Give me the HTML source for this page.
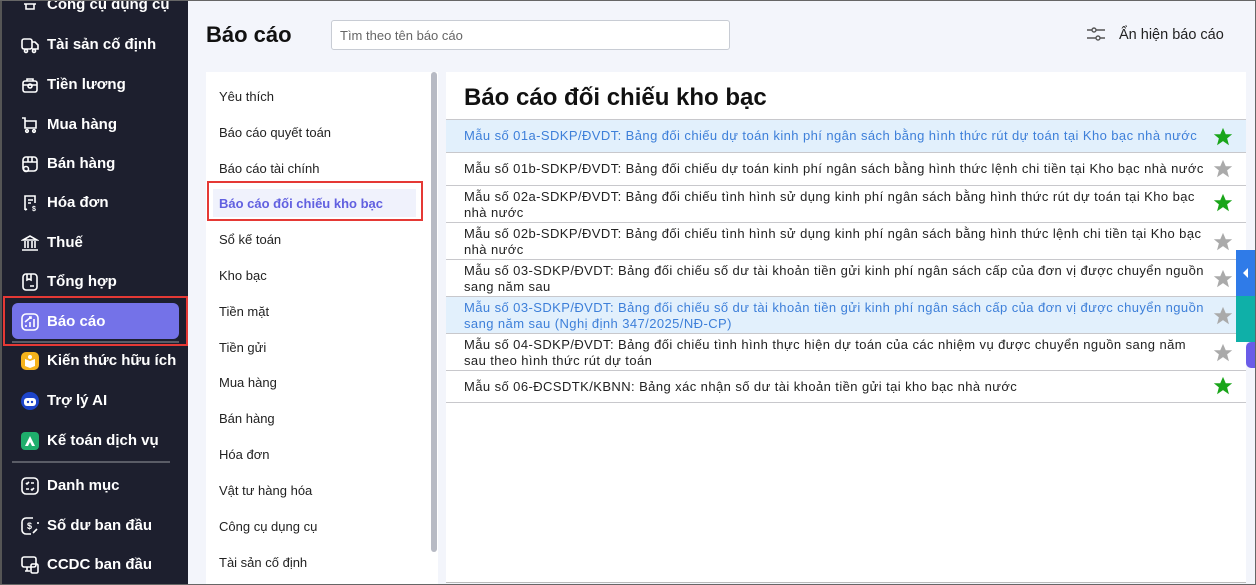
<!DOCTYPE html>
<html><head><meta charset="utf-8"><style>
*{box-sizing:border-box;margin:0;padding:0}
body{width:1256px;height:585px;overflow:hidden;background:#f3f5fb;font-family:"Liberation Sans",sans-serif;position:relative;color:#222}
.frame{position:absolute;inset:0;border:1px solid #666;border-left:none;pointer-events:none;z-index:20}
.side{position:absolute;left:0;top:0;width:188px;height:585px;background:#1d1f2e;border-left:2px solid #555}
.si{position:absolute;left:0;height:30px;width:188px;color:#fff;font-size:15px;font-weight:bold;line-height:30px;padding-left:45px}
.si svg{position:absolute;left:19px;top:6px}
.sel{position:absolute;left:10px;top:303px;width:167px;height:36px;background:#7472e8;border-radius:6px}
.redb{position:absolute;border:2px solid #e53935}
.hr{position:absolute;left:10px;width:158px;height:2px;background:#5a5c66}
h1{position:absolute;left:206px;top:22px;font-size:22px;font-weight:bold;color:#111}
.search{position:absolute;left:331px;top:20px;width:399px;height:30px;border:1px solid #c8ccd4;border-radius:3px;background:#fff;font-size:13px;color:#666;padding:7px 8px}
.toggle{position:absolute;left:1086px;top:25px;font-size:14.5px;color:#222}
.toggle span{position:absolute;left:33px;top:2px;white-space:nowrap}
.lp{position:absolute;left:206px;top:72px;width:232px;height:513px;background:#fff}
.li{position:absolute;left:13px;font-size:13px;color:#222}
.scroll{position:absolute;left:431px;top:72px;width:6px;height:480px;background:#b7bac4;border-radius:3px}
.rp{position:absolute;left:446px;top:72px;width:800px;height:511px;background:#fff;border-bottom:1px solid #bbb}
h2{position:absolute;left:18px;top:12px;font-size:24px;font-weight:bold;color:#111}
.row{position:absolute;left:0;width:800px;border-top:1px solid #c8c8cc;font-size:13px;letter-spacing:0.42px;color:#222;padding:6px 40px 0 18px;line-height:16px}
.row.b{background:#e2f0fc;color:#3d7fd9}
.row svg{position:absolute;right:12px}
</style></head><body>
<div class="side">
<div class="redb" style="left:1px;top:296px;width:185px;height:50px"></div>
<div class="sel"></div>
<div class="hr" style="top:341px;width:167px"></div>
<div class="hr" style="top:461px"></div>
<div class="si" style="top:-10px"><svg width="18" height="18" viewBox="0 0 18 18" fill="none" stroke="#fff" stroke-width="1.6"><path d="M3 8h12M5 8v5h8V8"/></svg>Công cụ dụng cụ</div>
<div class="si" style="top:30px"><svg width="18" height="18" viewBox="0 0 18 18" fill="none" stroke="#fff" stroke-width="1.6"><rect x="1" y="3" width="10" height="10" rx="2"/><path d="M11 6h3l3 3v4h-6"/><circle cx="5" cy="15" r="1.5"/><circle cx="13" cy="15" r="1.5"/></svg>Tài sản cố định</div>
<div class="si" style="top:70px"><svg width="18" height="18" viewBox="0 0 18 18" fill="none" stroke="#fff" stroke-width="1.6"><rect x="2" y="5" width="14" height="11" rx="2"/><path d="M6 5V3h6v2M2 9h14"/><circle cx="9" cy="10" r="2"/></svg>Tiền lương</div>
<div class="si" style="top:110px"><svg width="18" height="18" viewBox="0 0 18 18" fill="none" stroke="#fff" stroke-width="1.6"><path d="M1 2h3v10h11V5H4"/><circle cx="6" cy="15" r="1.3"/><circle cx="13" cy="15" r="1.3"/></svg>Mua hàng</div>
<div class="si" style="top:149px"><svg width="18" height="18" viewBox="0 0 18 18" fill="none" stroke="#fff" stroke-width="1.6"><rect x="2" y="2" width="14" height="14" rx="3"/><path d="M2 7h14M7 2v5M11 2v5"/><circle cx="5" cy="14" r="2.5"/></svg>Bán hàng</div>
<div class="si" style="top:188px"><svg width="18" height="18" viewBox="0 0 18 18" fill="none" stroke="#fff" stroke-width="1.6"><path d="M4 16V2h10v7M4 16l2-1"/><path d="M7 6h5M7 9h3"/><text x="11" y="17" font-size="7" fill="#fff" stroke="none">$</text></svg>Hóa đơn</div>
<div class="si" style="top:228px"><svg width="18" height="18" viewBox="0 0 18 18" fill="none" stroke="#fff" stroke-width="1.6"><path d="M2 6l7-4 7 4zM4 7v7M7 7v7M11 7v7M14 7v7M1 16h16"/></svg>Thuế</div>
<div class="si" style="top:267px"><svg width="18" height="18" viewBox="0 0 18 18" fill="none" stroke="#fff" stroke-width="1.6"><rect x="2" y="1" width="14" height="16" rx="3"/><path d="M6 1v6l2-1 2 1V1M9 13h4"/></svg>Tổng hợp</div>
<div class="si" style="top:307px"><svg width="18" height="18" viewBox="0 0 18 18" fill="none" stroke="#fff" stroke-width="1.6"><rect x="1" y="1" width="16" height="16" rx="4"/><path d="M5 14v-2M9 14V9M13 14V6M4 9l6-5M8 4h2v2"/></svg>Báo cáo</div>
<div class="si" style="top:346px"><svg width="18" height="18" viewBox="0 0 18 18"><rect x="0" y="0" width="18" height="18" rx="5" fill="#f5b31b"/><path d="M4 7l5 2 5-2v7l-5 2-5-2z" fill="#fff"/><circle cx="9" cy="5" r="2" fill="#fff"/></svg>Kiến thức hữu ích</div>
<div class="si" style="top:386px"><svg width="18" height="18" viewBox="0 0 18 18"><circle cx="9" cy="9" r="9" fill="#1d44c9"/><rect x="3" y="6" width="12" height="8" rx="3" fill="#fff"/><circle cx="7" cy="10" r="1.2" fill="#1d44c9"/><circle cx="11" cy="10" r="1.2" fill="#1d44c9"/></svg>Trợ lý AI</div>
<div class="si" style="top:426px"><svg width="18" height="18" viewBox="0 0 18 18"><rect width="18" height="18" rx="4" fill="#1fae6c"/><path d="M4 14L9 4l5 10h-3L9 10l-2 4z" fill="#fff"/></svg>Kế toán dịch vụ</div>
<div class="si" style="top:471px"><svg width="18" height="18" viewBox="0 0 18 18" fill="none" stroke="#fff" stroke-width="1.6"><rect x="1" y="1" width="16" height="16" rx="4"/><path d="M5 6l1 1 2-2M10 6h3M5 12h3M10 12l1 1 2-2"/></svg>Danh mục</div>
<div class="si" style="top:511px"><svg width="18" height="18" viewBox="0 0 18 18" fill="none" stroke="#fff" stroke-width="1.6"><path d="M12 1H5a4 4 0 00-4 4v8a4 4 0 004 4h5M17 7V5"/><text x="6" y="12" font-size="9" fill="#fff" stroke="none">$</text><path d="M12 16l4-4"/></svg>Số dư ban đầu</div>
<div class="si" style="top:550px"><svg width="18" height="18" viewBox="0 0 18 18" fill="none" stroke="#fff" stroke-width="1.6"><rect x="1" y="1" width="14" height="10" rx="2"/><path d="M4 15h5M6 11v4"/><rect x="10" y="8" width="7" height="9" rx="1.5"/></svg>CCDC ban đầu</div>
</div>

<h1>Báo cáo</h1>
<div class="search">Tìm theo tên báo cáo</div>
<div class="toggle"><svg width="20" height="18" viewBox="0 0 20 18" fill="none" stroke="#555" stroke-width="1.4"><path d="M1 5h5M10 5h9M1 13h9M14 13h5"/><circle cx="8" cy="5" r="2"/><circle cx="12" cy="13" r="2"/></svg><span>Ẩn hiện báo cáo</span></div>

<div class="lp">
<div class="li" style="top:17px">Yêu thích</div>
<div class="li" style="top:53px">Báo cáo quyết toán</div>
<div class="li" style="top:89px">Báo cáo tài chính</div>
<div style="position:absolute;left:7px;top:117px;width:203px;height:28px;background:#f0f2fc"></div>
<div class="redb" style="left:1px;top:109px;width:216px;height:40px"></div>
<div class="li" style="top:124px;color:#6160e0;font-weight:bold">Báo cáo đối chiếu kho bạc</div>
<div class="li" style="top:160px">Sổ kế toán</div>
<div class="li" style="top:196px">Kho bạc</div>
<div class="li" style="top:232px">Tiền mặt</div>
<div class="li" style="top:268px">Tiền gửi</div>
<div class="li" style="top:303px">Mua hàng</div>
<div class="li" style="top:339px">Bán hàng</div>
<div class="li" style="top:375px">Hóa đơn</div>
<div class="li" style="top:411px">Vật tư hàng hóa</div>
<div class="li" style="top:447px">Công cụ dụng cụ</div>
<div class="li" style="top:483px">Tài sản cố định</div>
</div>
<div class="scroll"></div>

<div class="rp">
<h2>Báo cáo đối chiếu kho bạc</h2>
<div class="row b" style="top:47px;height:33px;padding-top:8px">Mẫu số 01a-SDKP/ĐVDT: Bảng đối chiếu dự toán kinh phí ngân sách bằng hình thức rút dự toán tại Kho bạc nhà nước<svg style="top:6px" width="22" height="22" viewBox="0 0 24 24"><path d="M12 2l3 7h7l-5.5 4.5 2 7.5L12 16.5 5.5 21l2-7.5L2 9h7z" fill="#1aa51a"/></svg></div>
<div class="row" style="top:80px;height:33px;padding-top:8px">Mẫu số 01b-SDKP/ĐVDT: Bảng đối chiếu dự toán kinh phí ngân sách bằng hình thức lệnh chi tiền tại Kho bạc nhà nước<svg style="top:5px" width="22" height="22" viewBox="0 0 24 24"><path d="M12 2l3 7h7l-5.5 4.5 2 7.5L12 16.5 5.5 21l2-7.5L2 9h7z" fill="#aaa"/></svg></div>
<div class="row" style="top:113px;height:37px;padding-top:3px">Mẫu số 02a-SDKP/ĐVDT: Bảng đối chiếu tình hình sử dụng kinh phí ngân sách bằng hình thức rút dự toán tại Kho bạc nhà nước<svg style="top:6px" width="22" height="22" viewBox="0 0 24 24"><path d="M12 2l3 7h7l-5.5 4.5 2 7.5L12 16.5 5.5 21l2-7.5L2 9h7z" fill="#1aa51a"/></svg></div>
<div class="row" style="top:150px;height:37px;padding-top:3px">Mẫu số 02b-SDKP/ĐVDT: Bảng đối chiếu tình hình sử dụng kinh phí ngân sách bằng hình thức lệnh chi tiền tại Kho bạc nhà nước<svg style="top:8px" width="22" height="22" viewBox="0 0 24 24"><path d="M12 2l3 7h7l-5.5 4.5 2 7.5L12 16.5 5.5 21l2-7.5L2 9h7z" fill="#aaa"/></svg></div>
<div class="row" style="top:187px;height:37px;padding-top:3px">Mẫu số 03-SDKP/ĐVDT: Bảng đối chiếu số dư tài khoản tiền gửi kinh phí ngân sách cấp của đơn vị được chuyển nguồn sang năm sau<svg style="top:8px" width="22" height="22" viewBox="0 0 24 24"><path d="M12 2l3 7h7l-5.5 4.5 2 7.5L12 16.5 5.5 21l2-7.5L2 9h7z" fill="#aaa"/></svg></div>
<div class="row b" style="top:224px;height:37px;padding-top:3px">Mẫu số 03-SDKP/ĐVDT: Bảng đối chiếu số dư tài khoản tiền gửi kinh phí ngân sách cấp của đơn vị được chuyển nguồn sang năm sau (Nghị định 347/2025/NĐ-CP)<svg style="top:8px" width="22" height="22" viewBox="0 0 24 24"><path d="M12 2l3 7h7l-5.5 4.5 2 7.5L12 16.5 5.5 21l2-7.5L2 9h7z" fill="#aaa"/></svg></div>
<div class="row" style="top:261px;height:37px;padding-top:3px">Mẫu số 04-SDKP/ĐVDT: Bảng đối chiếu tình hình thực hiện dự toán của các nhiệm vụ được chuyển nguồn sang năm sau theo hình thức rút dự toán<svg style="top:8px" width="22" height="22" viewBox="0 0 24 24"><path d="M12 2l3 7h7l-5.5 4.5 2 7.5L12 16.5 5.5 21l2-7.5L2 9h7z" fill="#aaa"/></svg></div>
<div class="row" style="top:298px;height:33px;padding-top:8px;border-bottom:1px solid #c8c8cc">Mẫu số 06-ĐCSDTK/KBNN: Bảng xác nhận số dư tài khoản tiền gửi tại kho bạc nhà nước<svg style="top:4px" width="22" height="22" viewBox="0 0 24 24"><path d="M12 2l3 7h7l-5.5 4.5 2 7.5L12 16.5 5.5 21l2-7.5L2 9h7z" fill="#1aa51a"/></svg></div>
</div>

<div style="position:absolute;left:1246px;top:342px;width:10px;height:26px;background:#6a5ce8;border-radius:5px 0 0 5px"></div>
<div style="position:absolute;left:1236px;top:250px;width:20px;height:46px;background:#2f7be8"><div style="position:absolute;left:7px;top:18px;border-right:5px solid #fff;border-top:5px solid transparent;border-bottom:5px solid transparent"></div></div>
<div style="position:absolute;left:1236px;top:296px;width:20px;height:46px;background:#0fb0a8"></div>
<div class="frame"></div>
</body></html>
